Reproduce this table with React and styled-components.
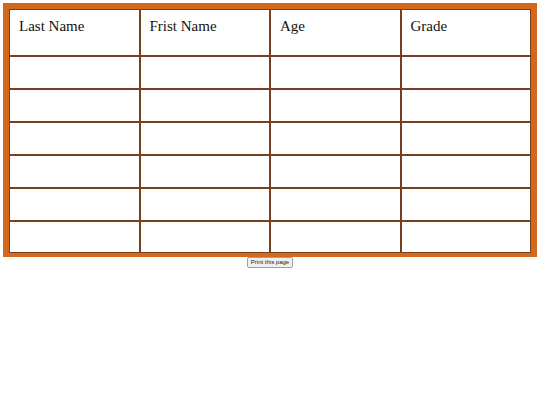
import React from "react";
import styled, { createGlobalStyle } from "styled-components";

const GlobalStyle = createGlobalStyle`
  body {
    margin: 0;
    background: #ffffff;
    font-family: "Liberation Serif", "Times New Roman", serif;
  }
`

const Page = styled.div`
  padding: 3px;
  display: flex;
  flex-direction: column;
  align-items: center;
`

const Table = styled.table`
  width: 100%;
  border-collapse: separate;
  border-spacing: 0;
  border: 6px solid #d2691e;
  border-bottom-width: 4px;
  table-layout: fixed;
`

const HeadCell = styled.th`
  height: 47px;
  padding: 8px 9px 0;
  box-sizing: border-box;
  text-align: left;
  vertical-align: top;
  font-weight: normal;
  font-size: 15px;
  color: #111;
  border: 1px solid #74401f;
`

const Cell = styled.td`
  height: ${({ last }) => (last ? "32px" : "33px")};
  box-sizing: border-box;
  border: 1px solid #74401f;
`

const PrintButton = styled.button`
  font-family: "Liberation Sans", Arial, sans-serif;
  font-size: 6px;
  line-height: 7px;
  padding: 1px 3px;
  color: #222;
  background: #efefef;
  border: 1px solid #a0a0a0;
  border-radius: 2px;
`

const headers = ["Last Name", "Frist Name", "Age", "Grade"];
const rows = [0, 1, 2, 3, 4, 5];

const App = () => {
    return (
        <Page>
            <GlobalStyle/>
            <Table>
                <thead>
                <tr>
                    {headers.map((h) => <HeadCell key={h}>{h}</HeadCell>)}
                </tr>
                </thead>
                <tbody>
                {rows.map((r) => (
                    <tr key={r}>
                        {headers.map((h) => <Cell key={h} last={r === rows.length - 1}/>)}
                    </tr>
                ))}
                </tbody>
            </Table>
            <PrintButton onClick={() => window.print()}>Print this page</PrintButton>
        </Page>
    );
}

export default App;
